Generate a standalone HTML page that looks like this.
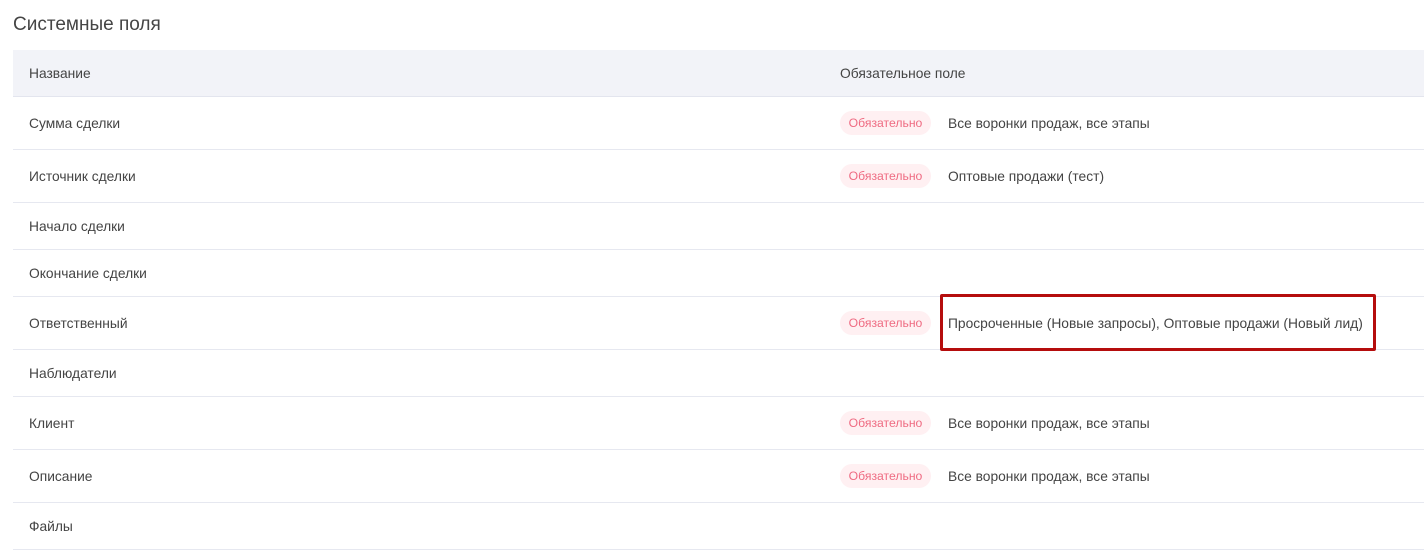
<!DOCTYPE html>
<html><head><meta charset="utf-8"><style>
body{margin:0;width:1424px;height:555px;background:#fff;font-family:"Liberation Sans",sans-serif;position:relative;overflow:hidden;color:#3a3a3a}
.t{position:absolute;left:13px;top:14px;font-size:19px;color:#454545}
.hd{position:absolute;left:13px;right:0;top:50px;height:46px;background:#f2f3f8;border-bottom:1px solid #e3e5ee}
.row{position:absolute;left:13px;right:0;border-bottom:1px solid #e6e8f0}
.c{position:absolute;font-size:13.8px;line-height:16px;color:#444}
.b{position:absolute;left:827px;height:24px;width:91px;border-radius:12px;background:#fff0f2;color:#ef6b82;font-size:12.2px;line-height:24px;text-align:center}
.box{position:absolute;left:940px;top:294px;width:430px;height:51px;border:3px solid #b50d0d;border-radius:2px}
</style></head><body>
<div class="t">Системные поля</div>
<div class="hd"><div class="c" style="left:16px;top:16px">Название</div><div class="c" style="left:827px;top:16px">Обязательное поле</div></div>

<div class="row" style="top:97px;height:52px"><div class="c" style="left:16px;top:19px">Сумма сделки</div><div class="b" style="top:14px">Обязательно</div><div class="c" style="left:935px;top:19px">Все воронки продаж, все этапы</div></div>
<div class="row" style="top:150px;height:52px"><div class="c" style="left:16px;top:19px">Источник сделки</div><div class="b" style="top:14px">Обязательно</div><div class="c" style="left:935px;top:19px">Оптовые продажи (тест)</div></div>
<div class="row" style="top:203px;height:46px"><div class="c" style="left:16px;top:16px">Начало сделки</div></div>
<div class="row" style="top:250px;height:46px"><div class="c" style="left:16px;top:16px">Окончание сделки</div></div>
<div class="row" style="top:297px;height:52px"><div class="c" style="left:16px;top:19px">Ответственный</div><div class="b" style="top:14px">Обязательно</div><div class="c" style="left:935px;top:19px">Просроченные (Новые запросы), Оптовые продажи (Новый лид)</div></div>
<div class="row" style="top:350px;height:46px"><div class="c" style="left:16px;top:16px">Наблюдатели</div></div>
<div class="row" style="top:397px;height:52px"><div class="c" style="left:16px;top:19px">Клиент</div><div class="b" style="top:14px">Обязательно</div><div class="c" style="left:935px;top:19px">Все воронки продаж, все этапы</div></div>
<div class="row" style="top:450px;height:52px"><div class="c" style="left:16px;top:19px">Описание</div><div class="b" style="top:14px">Обязательно</div><div class="c" style="left:935px;top:19px">Все воронки продаж, все этапы</div></div>
<div class="row" style="top:503px;height:46px"><div class="c" style="left:16px;top:16px">Файлы</div></div>
<div class="box"></div>
</body></html>
